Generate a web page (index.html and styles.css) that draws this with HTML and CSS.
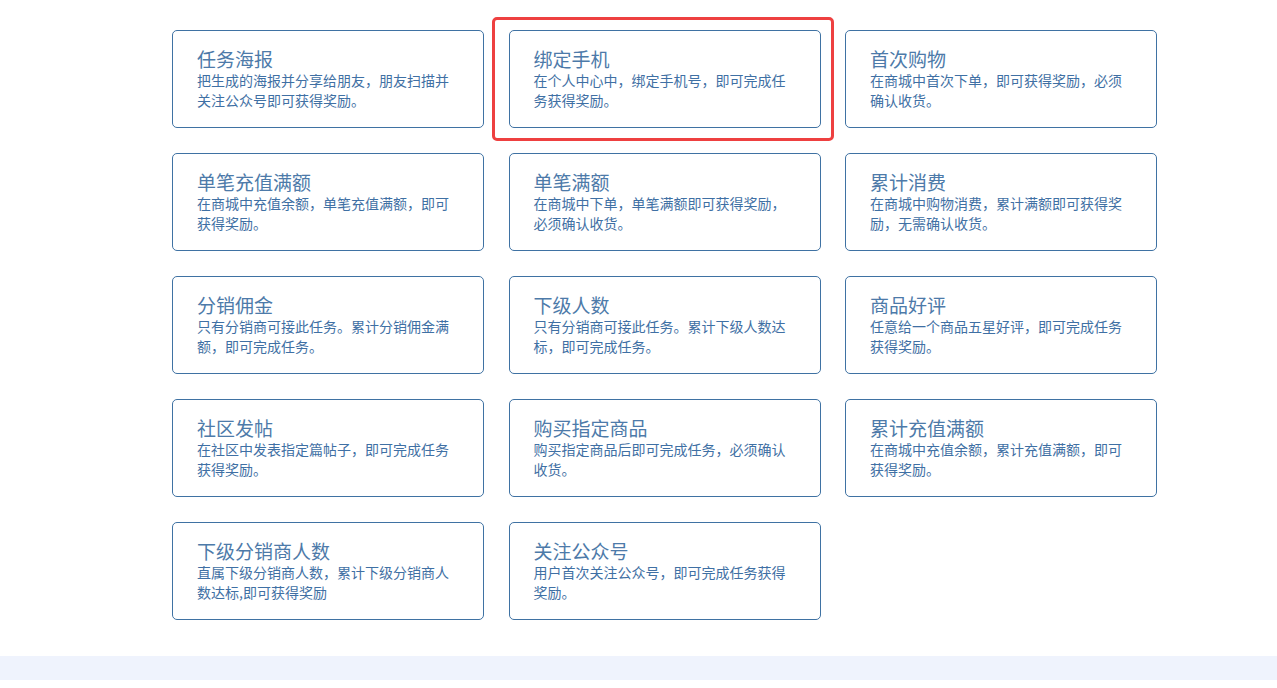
FILE: index.html
```html
<!DOCTYPE html>
<html lang="zh-CN">
<head>
<meta charset="utf-8">
<title>任务</title>
<link rel="stylesheet" href="styles.css">
</head>
<body>
<main class="page">
  <div class="grid">
    <div class="card"><div class="title">任务海报</div><div class="desc">把生成的海报并分享给朋友，朋友扫描并关注公众号即可获得奖励。</div></div>
    <div class="card selected"><div class="title">绑定手机</div><div class="desc">在个人中心中，绑定手机号，即可完成任务获得奖励。</div></div>
    <div class="card"><div class="title">首次购物</div><div class="desc">在商城中首次下单，即可获得奖励，必须确认收货。</div></div>
    <div class="card"><div class="title">单笔充值满额</div><div class="desc">在商城中充值余额，单笔充值满额，即可获得奖励。</div></div>
    <div class="card"><div class="title">单笔满额</div><div class="desc">在商城中下单，单笔满额即可获得奖励，必须确认收货。</div></div>
    <div class="card"><div class="title">累计消费</div><div class="desc">在商城中购物消费，累计满额即可获得奖励，无需确认收货。</div></div>
    <div class="card"><div class="title">分销佣金</div><div class="desc">只有分销商可接此任务。累计分销佣金满额，即可完成任务。</div></div>
    <div class="card"><div class="title">下级人数</div><div class="desc">只有分销商可接此任务。累计下级人数达标，即可完成任务。</div></div>
    <div class="card"><div class="title">商品好评</div><div class="desc">任意给一个商品五星好评，即可完成任务获得奖励。</div></div>
    <div class="card"><div class="title">社区发帖</div><div class="desc">在社区中发表指定篇帖子，即可完成任务获得奖励。</div></div>
    <div class="card"><div class="title">购买指定商品</div><div class="desc">购买指定商品后即可完成任务，必须确认收货。</div></div>
    <div class="card"><div class="title">累计充值满额</div><div class="desc">在商城中充值余额，累计充值满额，即可获得奖励。</div></div>
    <div class="card"><div class="title">下级分销商人数</div><div class="desc">直属下级分销商人数，累计下级分销商人数达标,即可获得奖励</div></div>
    <div class="card"><div class="title">关注公众号</div><div class="desc">用户首次关注公众号，即可完成任务获得奖励。</div></div>
  </div>
</main>
<footer class="band"></footer>
</body>
</html>
```

FILE: styles.css
```css
html, body {
  margin: 0;
  padding: 0;
  background: #ffffff;
}
body {
  font-family: "Noto Sans CJK SC", "Liberation Sans", sans-serif;
  height: 688px;
  overflow: hidden;
}
.page {
  padding: 30px 0 36px 172px;
}
.grid {
  display: grid;
  grid-template-columns: repeat(3, 312px);
  grid-auto-rows: 98px;
  column-gap: 24.5px;
  row-gap: 25px;
}
.card {
  position: relative;
  box-sizing: border-box;
  border: 1px solid #3f72a3;
  border-radius: 5px;
  padding: 17px 30px 0 24px;
  background: #fff;
}
.card.selected::after {
  content: "";
  position: absolute;
  top: -14px;
  left: -18px;
  right: -14px;
  bottom: -14px;
  border: 3px solid #ee4040;
  border-radius: 5px;
  pointer-events: none;
}
.title {
  font-size: 19px;
  line-height: 22px;
  color: #4d7aa9;
}
.desc {
  font-size: 14px;
  line-height: 20px;
  color: #3f70a4;
}
.band {
  height: 24px;
  background: #eff3fd;
}
```
